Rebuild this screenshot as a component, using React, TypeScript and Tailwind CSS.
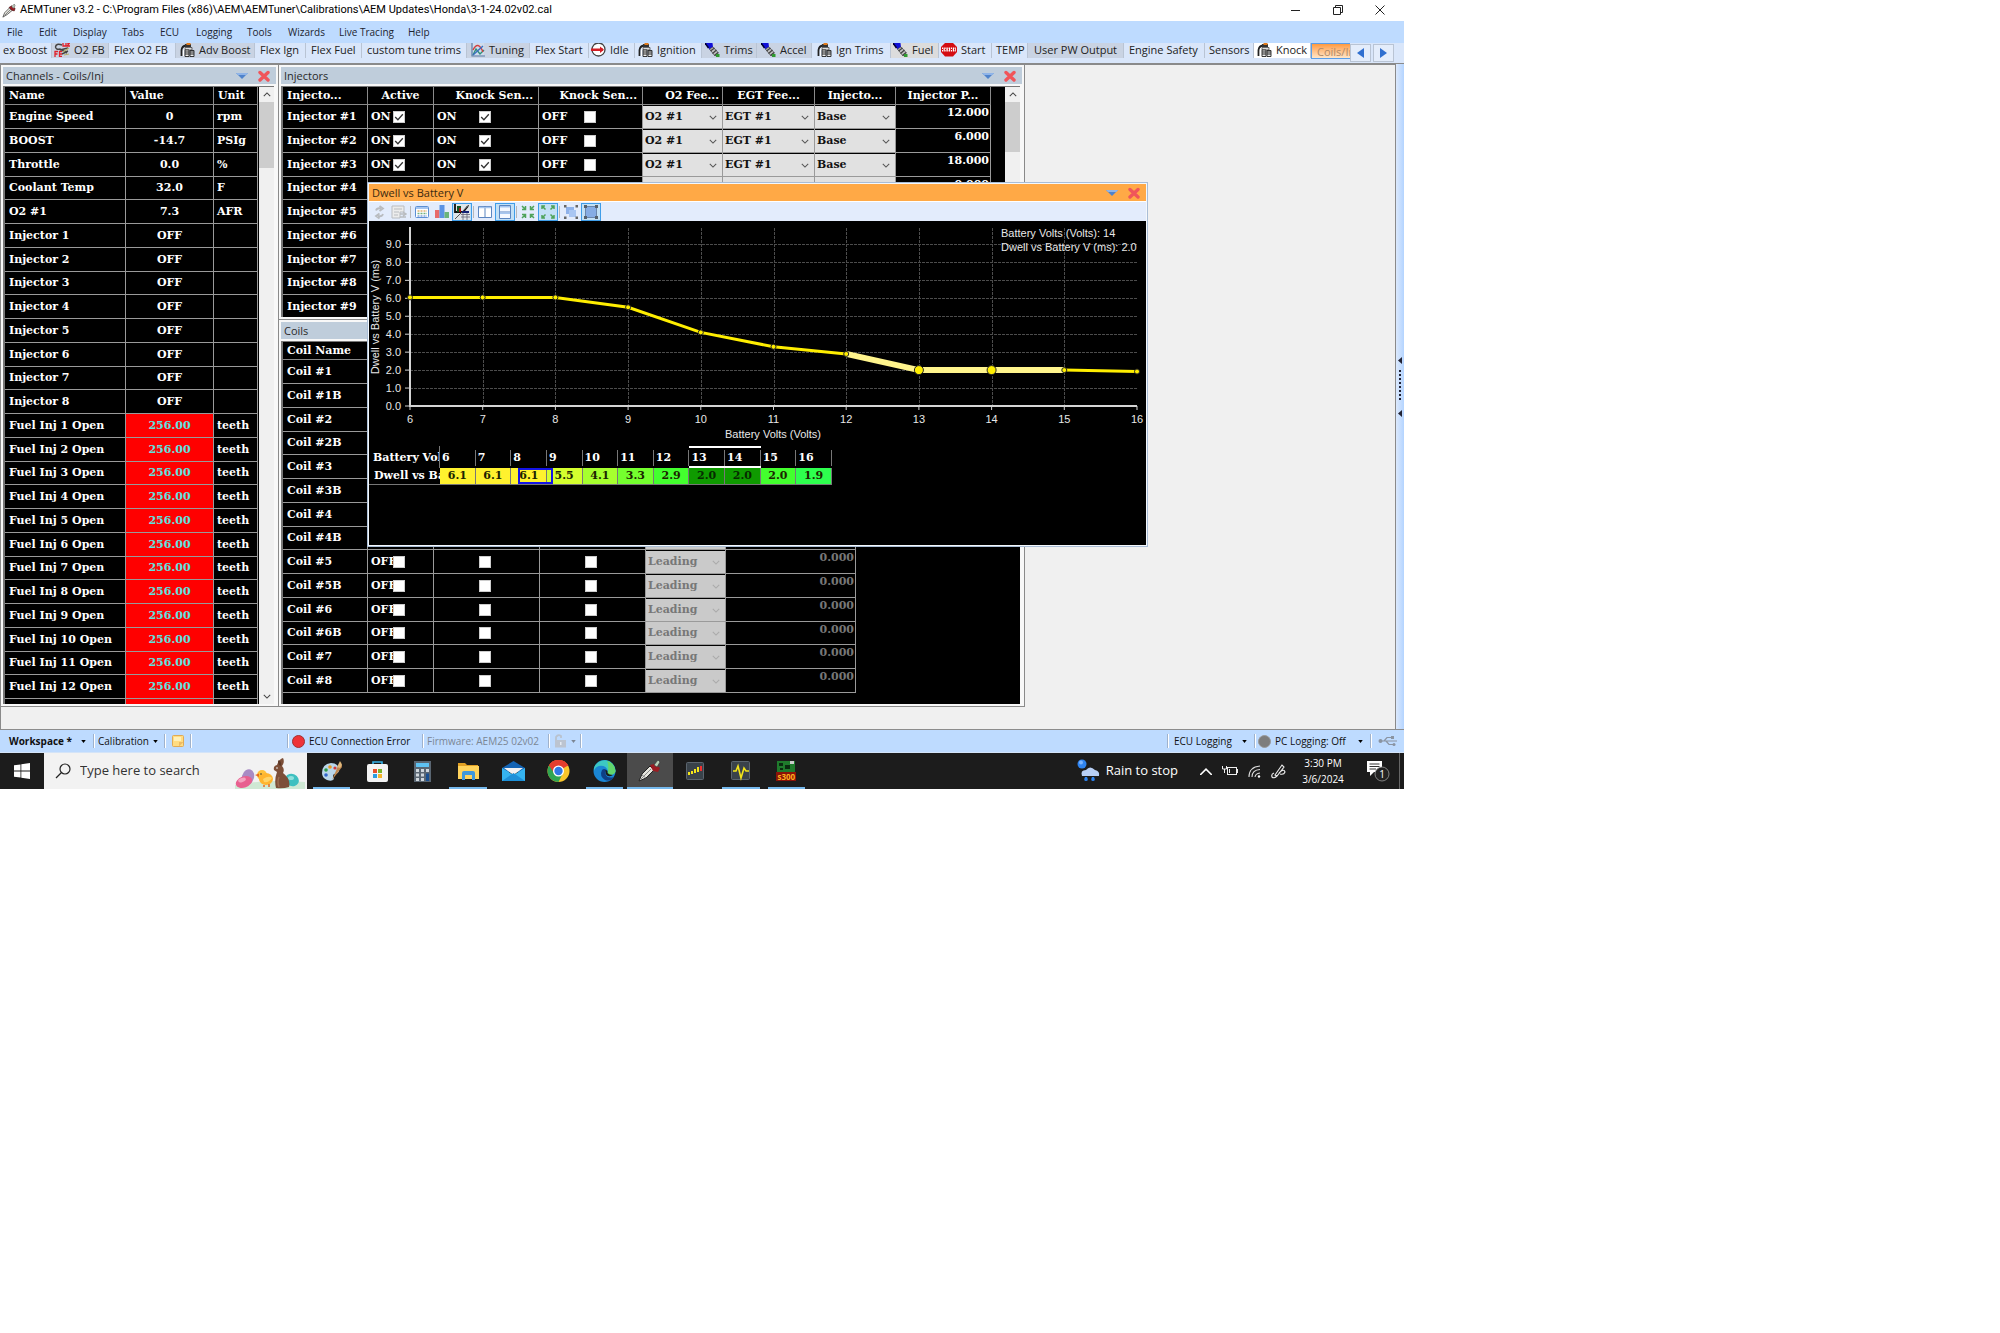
import React from "react";

const SLAB = "font-['DejaVu_Serif',serif] font-bold text-[11px] leading-4";
const UI = "font-['Open_Sans','Noto_Sans',sans-serif]";

/* ---------- small icons ---------- */

function PlugIcon({ className }: { className: string }) {
  return (
    <svg viewBox="0 0 16 16" className={className} aria-hidden="true">
      <path d="M1 15 L3 10 L9 4 L12 7 L6 12 Z" fill="#e4e4dc" stroke="#333" strokeWidth=".8" />
      <path d="M3 13 L10 6" stroke="#777" strokeWidth="1" />
      <path d="M8 4 L11 2 L15 5 L14 8 L11 7 Z" fill="#9b1c22" stroke="#3a0a0c" strokeWidth=".6" />
      <path d="M11 3 L14 0 L15 2 L13 5 Z" fill="#b8c8b8" stroke="#444" strokeWidth=".5" />
    </svg>
  );
}

function CoilIcon() {
  return (
    <svg viewBox="0 0 15 14" className="h-[14px] w-[15px] flex-none" aria-hidden="true">
      <path d="M1.500 13 V7 Q2 3 6 2.500" fill="none" stroke="#222" strokeWidth="1.800" />
      <path d="M3.500 13 V8 Q4 5 6 4.500" fill="none" stroke="#fff" strokeWidth="1.200" />
      <rect x="5" y="1" width="6" height="3" fill="#333" />
      <rect x="6.500" y="0" width="4" height="2" fill="#e07a1c" />
      <path d="M5 4.500 H12 V7 H5 Z" fill="#ddd" stroke="#333" strokeWidth=".7" />
      <path d="M5 7 H9 V13.500 H5 Z M10 7.500 H14 V13.500 H10 Z" fill="#eee" stroke="#222" strokeWidth=".9" />
      <path d="M5 9 H9 M5 11 H9 M10 9 H14 M10 11 H14" stroke="#222" strokeWidth="1" />
    </svg>
  );
}

function InjectorIcon() {
  return (
    <svg viewBox="0 0 15 14" className="h-[14px] w-[15px] flex-none" aria-hidden="true">
      <path d="M0 0 H7.500 L8 4 L4.500 6.500 Z" fill="#1010d8" />
      <path d="M0 0 L3.500 5" stroke="#003" strokeWidth="1.500" />
      <path d="M4.500 6 L8 4 L13.500 10 L10 13 Z" fill="#c4c4c4" stroke="#444" strokeWidth=".7" />
      <path d="M5.500 8 L9.500 5 M7.500 10.500 L11.500 7 M9.500 12.500 L13 9.500" stroke="#444" strokeWidth="1.300" />
      <rect x="11" y="11" width="3.500" height="3" fill="#2f9a2f" />
    </svg>
  );
}

function FeedbackIcon() {
  return (
    <svg viewBox="0 0 16 14" className="h-[14px] w-[16px] flex-none" aria-hidden="true">
      <path d="M8 2 Q2 0 1.500 4 Q2 7 6 6 L13 10 M6 7 L14 5 M8 11 L14 8" fill="none" stroke="#444" strokeWidth="1.500" />
      <path d="M9 9 L15 5 M10 12 L15 11" stroke="#b7b06a" strokeWidth="1.200" />
      <path d="M9 0 V3 H12 V0 M13 0 H15.500 L13 3 H16" fill="none" stroke="#e0202a" strokeWidth="1.300" />
      <path d="M1 14 V8.500 H4 M1 11 H3.500 M8 8.500 H5.500 V13.500 H8 M5.500 11 H8" fill="none" stroke="#e0202a" strokeWidth="1.300" />
    </svg>
  );
}

function CurveIcon() {
  return (
    <svg viewBox="0 0 14 14" className="h-[14px] w-[14px] flex-none" aria-hidden="true">
      <rect x="1" y="0" width="12" height="12" fill="#cfdcec" />
      <path d="M1 0 V13 H14" fill="none" stroke="#5a7ca8" strokeWidth="1.200" />
      <path d="M2 12 L5 6 L9 11 L13 7" fill="none" stroke="#2f8f7a" strokeWidth="1.400" />
      <path d="M2 7 Q7 -3 12 9" fill="none" stroke="#d04040" strokeWidth="1.400" />
      <path d="M2 12 L12 3" fill="none" stroke="#3a6fc0" strokeWidth="1.400" />
    </svg>
  );
}

function IdleIcon() {
  return (
    <svg viewBox="0 0 15 14" className="h-[14px] w-[15px] flex-none" aria-hidden="true">
      <circle cx="7.500" cy="6.500" r="6.500" fill="#fff" stroke="#444" strokeWidth="1.300" />
      <rect x="0" y="5.500" width="12" height="2.500" fill="#d21f26" />
      <path d="M9 3.500 L13 6.700 L9 10 Z" fill="#d21f26" />
    </svg>
  );
}

function StartSignIcon() {
  return (
    <svg viewBox="0 0 16 14" className="h-[14px] w-[16px] flex-none" aria-hidden="true">
      <path d="M4 0 H12 L16 4 V9 L12 13.500 H4 L0 9 V4 Z" fill="#d40c12" />
      <path d="M1 6.500 H15" stroke="#fff" strokeWidth="4" strokeDasharray="1.400 .8" />
      <path d="M1 6.500 H15" stroke="#d40c12" strokeWidth="1" strokeDasharray="1 2" />
    </svg>
  );
}

function Chevron({ className, d = "M1 1 L5 5 L9 1" }: { className: string; d?: string }) {
  return (
    <svg viewBox="0 0 10 6" className={className} aria-hidden="true">
      <path d={d} fill="none" stroke="currentColor" strokeWidth="1.300" />
    </svg>
  );
}

function CaptionButtons() {
  return (
    <span className="flex items-center gap-[10px] pr-[6px]">
      <button aria-label="Options" className="h-3 w-3">
        <svg viewBox="0 0 12 12" className="h-3 w-3">
          <path d="M0 3 H12 L6 9 Z" fill="#4f83cc" />
          <path d="M0 3 H12 L10.500 5 H2 Z" fill="#8fb4e8" />
        </svg>
      </button>
      <button aria-label="Close panel" className="h-3 w-3">
        <svg viewBox="0 0 12 12" className="h-3 w-3">
          <path d="M2 2.500 L10 10 M10 2.500 L2 10" stroke="#f0555a" strokeWidth="3.400" strokeLinecap="round" />
        </svg>
      </button>
    </span>
  );
}

/* ---------- tab strip ---------- */

type Tab = { label: string; w: string; icon?: React.ReactNode; tone?: string };

const TABS: Tab[] = [
  { label: "ex Boost", w: "w-[52px] pl-[3px]" },
  { label: "O2 FB", w: "w-[57px] pl-[2px]", icon: <FeedbackIcon />, tone: "bg-[#c9d3e3]" },
  { label: "Flex O2 FB", w: "w-[67px] pl-[5px]" },
  { label: "Adv Boost", w: "w-[79px] pl-1", icon: <CoilIcon />, tone: "bg-[#c9d3e3]" },
  { label: "Flex Ign", w: "w-[51px] pl-[5px]" },
  { label: "Flex Fuel", w: "w-[56px] pl-[5px]" },
  { label: "custom tune trims", w: "w-[105px] pl-[5px]" },
  { label: "Tuning", w: "w-[63px] pl-1", icon: <CurveIcon />, tone: "bg-[#c9d3e3]" },
  { label: "Flex Start", w: "w-[59px] pl-[5px]" },
  { label: "Idle", w: "w-[46px] pl-[2px]", icon: <IdleIcon /> },
  { label: "Ignition", w: "w-[67px] pl-[3px]", icon: <CoilIcon /> },
  { label: "Trims", w: "w-[55px] pl-[3px]", icon: <InjectorIcon />, tone: "bg-[#c9d3e3]" },
  { label: "Accel", w: "w-[55px] pl-1", icon: <InjectorIcon />, tone: "bg-[#c9d3e3]" },
  { label: "Ign Trims", w: "w-[79px] pl-[5px]", icon: <CoilIcon /> },
  { label: "Fuel", w: "w-[48px] pl-[2px]", icon: <InjectorIcon />, tone: "bg-[#dcdcdc]" },
  { label: "Start", w: "w-[53px] pl-[2px]", icon: <StartSignIcon /> },
  { label: "TEMP", w: "w-[36px] pl-[4px]" },
  { label: "User PW Output", w: "w-[96px] pl-[6px]", tone: "bg-[#c9d3e3]" },
  { label: "Engine Safety", w: "w-[81px] pl-[5px]" },
  { label: "Sensors", w: "w-[49px] pl-[4px]" },
  { label: "Knock", w: "w-[57px] pl-[3px]", icon: <CoilIcon />, tone: "bg-white" },
];

function TabStrip() {
  return (
    <div className="flex h-5 items-start bg-[#d9e6fa]">
      {TABS.map((t) => (
        <button
          key={t.label}
          className={`flex h-[15px] flex-none items-center gap-1 border-r border-[#b9c4d4] pb-[2px] text-left text-[11px] leading-[13px] whitespace-nowrap text-[#222] ${t.w} ${t.tone ?? ""}`}
        >
          {t.icon}
          <span>{t.label}</span>
        </button>
      ))}
      <button className="h-4 w-[39px] flex-none overflow-hidden border border-r-0 border-[#5a9ee8] bg-linear-to-b from-[#ff9a3c] to-[#ffe6c8] pl-[5px] text-left text-[11px] leading-[13px] whitespace-nowrap text-[#b08a68]">
        Coils/Inj
      </button>
      <button aria-label="Scroll tabs left" className="mt-px flex h-[18px] w-[21px] items-center justify-center border border-[#b9c4d4] bg-[#e4edfb]">
        <svg viewBox="0 0 8 10" className="h-[10px] w-2"><path d="M7 0 V10 L0 5 Z" fill="#2f6fd0" /></svg>
      </button>
      <button aria-label="Scroll tabs right" className="mt-px ml-[2px] flex h-[18px] w-[21px] items-center justify-center border border-[#b9c4d4] bg-[#e4edfb]">
        <svg viewBox="0 0 8 10" className="h-[10px] w-2"><path d="M0 0 V10 L7 5 Z" fill="#2f6fd0" /></svg>
      </button>
    </div>
  );
}

/* ---------- panels ---------- */

function Panel({ title, className, buttons = true, children }: { title: string; className: string; buttons?: boolean; children: React.ReactNode }) {
  return (
    <section className={`flex flex-col ${className}`}>
      <div className="flex flex-1 flex-col overflow-hidden border-2 border-[#f8f8f8]">
        <header className={`flex h-[17px] flex-none items-center justify-between bg-[#bfcddb] pl-[3px] ${UI}`}>
          <h2 className="text-[11px] leading-4 text-[#2a2a2a]">{title}</h2>
          {buttons && <CaptionButtons />}
        </header>
        <div className="flex flex-1 overflow-hidden border-t-2 border-r-2 border-[#f8f8f8] bg-black">
          <div className="flex flex-1 overflow-hidden border-t border-l-2 border-[#777]">{children}</div>
        </div>
      </div>
    </section>
  );
}

function ScrollBar({ thumb, down = false }: { thumb: string; down?: boolean }) {
  return (
    <div className="flex w-[15px] flex-none flex-col bg-[#f0f0f0] text-[#444]">
      <button aria-label="Scroll up" className="flex h-[15px] items-center justify-center">
        <Chevron className="h-[5px] w-2" d="M1 5 L5 1 L9 5" />
      </button>
      <div className={`bg-[#cdcdcd] ${thumb}`} />
      <div className="flex-1" />
      {down && (
        <button aria-label="Scroll down" className="flex h-[15px] items-center justify-center">
          <Chevron className="h-[5px] w-2" />
        </button>
      )}
    </div>
  );
}

const rowHeight = (i: number) => (i % 4 === 3 ? "h-[23px]" : "h-6");
const CELL = "border-r border-b border-[#9a9a9a] p-0";
const HEAD = "h-[18px] overflow-hidden border-r border-b border-[#8a8a8a] p-0 whitespace-nowrap";

const CHANNELS: [string, string, string][] = [
  ["Engine Speed", "0", "rpm"],
  ["BOOST", "-14.7", "PSIg"],
  ["Throttle", "0.0", "%"],
  ["Coolant Temp", "32.0", "F"],
  ["O2 #1", "7.3", "AFR"],
  ...[1, 2, 3, 4, 5, 6, 7, 8].map((n): [string, string, string] => [`Injector ${n}`, "OFF", ""]),
  ...[1, 2, 3, 4, 5, 6, 7, 8, 9, 10, 11, 12].map((n): [string, string, string] => [`Fuel Inj ${n} Open`, "256.00", "teeth"]),
  ["", " ", ""],
];

function ChannelsTable() {
  return (
    <div className="flex-1 overflow-hidden">
      <table className={`w-[253px] table-fixed border-separate border-spacing-0 text-white ${SLAB}`}>
        <colgroup>
          <col className="w-[121px]" />
          <col className="w-[88px]" />
          <col className="w-[44px]" />
        </colgroup>
        <thead>
          <tr>
            <th className={`${HEAD} pl-1 text-left`}>Name</th>
            <th className={`${HEAD} pl-1 text-left`}>Value</th>
            <th className={`${HEAD} pl-1 text-left`}>Unit</th>
          </tr>
        </thead>
        <tbody>
          {CHANNELS.map(([name, value, unit], i) => (
            <tr key={i} className={rowHeight(i)}>
              <td className={`${CELL} pl-1 whitespace-nowrap`}>{name}</td>
              <td className={`${CELL} text-center ${i > 12 ? "bg-[#ff0000] text-[#5fe3e0]" : ""}`}>{value}</td>
              <td className={`${CELL} pl-[3px]`}>{unit}</td>
            </tr>
          ))}
        </tbody>
      </table>
    </div>
  );
}

function Check({ text, label, checked, wide }: { text: string; label: string; checked: boolean; wide?: boolean }) {
  return (
    <label className="flex h-5 items-center pl-[3px]">
      <span className={`flex-none whitespace-nowrap ${wide ? "w-[42px]" : "w-[22px]"}`}>{text}</span>
      <span className="relative h-[12px] w-[12px] flex-none">
        <input type="checkbox" aria-label={label} defaultChecked={checked} className="block h-[12px] w-[12px] appearance-none border border-[#ccc] bg-white" />
        {checked && (
          <svg viewBox="0 0 11 11" className="pointer-events-none absolute inset-0 h-[12px] w-[12px]">
            <path d="M2 5.500 L4.500 8 L9 3" fill="none" stroke="#333" strokeWidth="1.200" />
          </svg>
        )}
      </span>
    </label>
  );
}

function Drop({ value, label, disabled }: { value: string; label: string; disabled?: boolean }) {
  return (
    <div className={`relative h-[22px] ${disabled ? "bg-[#cacaca] text-[#777]" : "bg-[#e1e1e1] text-[#111]"}`}>
      <select aria-label={label} disabled={disabled} defaultValue={value} className="block h-[22px] w-full appearance-none bg-transparent pl-[2px] opacity-100">
        <option>{value}</option>
      </select>
      <Chevron className={`pointer-events-none absolute top-[9px] right-[5px] h-[5px] w-2 ${disabled ? "text-[#aaa]" : "text-[#555]"}`} />
    </div>
  );
}

const PHASES = ["12.000", "6.000", "18.000", "0.000", "0.000", "0.000", "0.000", "0.000", "0.000"];

function InjectorsTable() {
  return (
    <div className="flex-1 overflow-hidden">
      <table className={`w-[708px] table-fixed border-separate border-spacing-0 text-white ${SLAB}`}>
        <colgroup>
          <col className="w-[85px]" />
          <col className="w-[66px]" />
          <col className="w-[105px]" />
          <col className="w-[104px]" />
          <col className="w-[80px]" />
          <col className="w-[92px]" />
          <col className="w-[81px]" />
          <col className="w-[95px]" />
        </colgroup>
        <thead>
          <tr>
            <th className={`${HEAD} pl-1 text-left`}>Injecto...</th>
            <th className={HEAD}>Active</th>
            <th className={`${HEAD} pr-[5px] text-right`}>Knock Sen...</th>
            <th className={`${HEAD} pr-[5px] text-right`}>Knock Sen...</th>
            <th className={`${HEAD} pr-[3px] text-right`}>O2 Fee...</th>
            <th className={HEAD}>EGT Fee...</th>
            <th className={HEAD}>Injecto...</th>
            <th className={HEAD}>Injector P...</th>
          </tr>
        </thead>
        <tbody>
          {PHASES.map((phase, i) => (
            <tr key={i} className={rowHeight(i)}>
              <td className={`${CELL} pl-1 whitespace-nowrap`}>Injector #{i + 1}</td>
              <td className={CELL}><Check text="ON" label={`Injector ${i + 1} active`} checked /></td>
              <td className={CELL}><Check text="ON" label={`Injector ${i + 1} knock sensor 1`} checked wide /></td>
              <td className={CELL}><Check text="OFF" label={`Injector ${i + 1} knock sensor 2`} checked={false} wide /></td>
              <td className={CELL}><Drop value="O2 #1" label={`Injector ${i + 1} O2 feedback`} /></td>
              <td className={CELL}><Drop value="EGT #1" label={`Injector ${i + 1} EGT feedback`} /></td>
              <td className={CELL}><Drop value="Base" label={`Injector ${i + 1} map`} /></td>
              <td className={`${CELL} pr-px text-right align-top`}>{phase}</td>
            </tr>
          ))}
        </tbody>
      </table>
    </div>
  );
}

const COILS = ["1", "1B", "2", "2B", "3", "3B", "4", "4B", "5", "5B", "6", "6B", "7", "8"];

function CoilsTable() {
  return (
    <div className="flex-1 overflow-hidden">
      <table className={`w-[573px] table-fixed border-separate border-spacing-0 text-white ${SLAB}`}>
        <colgroup>
          <col className="w-[85px]" />
          <col className="w-[66px]" />
          <col className="w-[106px]" />
          <col className="w-[106px]" />
          <col className="w-[80px]" />
          <col className="w-[130px]" />
        </colgroup>
        <thead>
          <tr>
            <th className={`${HEAD} pl-1 text-left`}>Coil Name</th>
            <th className={HEAD}>Active</th>
            <th className={HEAD}>Knock Sen...</th>
            <th className={HEAD}>Knock Sen...</th>
            <th className={HEAD}>Type</th>
            <th className={HEAD}>Phase</th>
          </tr>
        </thead>
        <tbody>
          {COILS.map((c, i) => (
            <tr key={c} className={rowHeight(i)}>
              <td className={`${CELL} pl-1`}>Coil #{c}</td>
              <td className={CELL}><Check text="OFF" label={`Coil ${c} active`} checked={false} /></td>
              <td className={CELL}><Check text="" label={`Coil ${c} knock sensor 1`} checked={false} wide /></td>
              <td className={CELL}><Check text="" label={`Coil ${c} knock sensor 2`} checked={false} wide /></td>
              <td className={CELL}><Drop value="Leading" label={`Coil ${c} type`} disabled /></td>
              <td className={`${CELL} pr-px text-right align-top text-[#777]`}>0.000</td>
            </tr>
          ))}
        </tbody>
      </table>
    </div>
  );
}

/* ---------- dwell window ---------- */

function ToolButton({ label, on, children }: { label: string; on?: boolean; children: React.ReactNode }) {
  return (
    <button aria-label={label} className={`flex h-[18px] w-5 flex-none items-center justify-center ${on ? "border border-[#3f9de8] bg-[#c2e0f6]" : ""}`}>
      <svg viewBox="0 0 16 16" className="h-4 w-4 flex-none">{children}</svg>
    </button>
  );
}

function ToolGap() {
  return <span className="mx-px h-3 w-px flex-none bg-[#b8b8b8]" />;
}

function DwellToolbar() {
  const gray = "#b9bcc0";
  const green = "#4fa35a";
  return (
    <div className="flex h-5 items-center border-t border-white bg-[#e3ecfc]">
      <ToolButton label="Refresh">
        <path d="M5 6.500 Q6 3.500 10 4.500 M8.500 2 L12 4.500 L8.500 7 M12 10 Q11 13 7 12 M8.500 9.500 L5 12 L8.500 14.500" fill="none" stroke={gray} strokeWidth="1.800" />
      </ToolButton>
      <ToolButton label="Export">
        <path d="M1 2 H13 V8 H9 V14 H1 Z" fill="#ececec" stroke={gray} />
        <path d="M3 5 H11 M3 8 H8 M3 11 H7" stroke={gray} />
        <path d="M9 10 H15 M12 8 L15 10 L12 12 M15 13 H9" fill="none" stroke={gray} strokeWidth="1.500" />
      </ToolButton>
      <ToolGap />
      <ToolButton label="Table">
        <rect x="1.500" y="2.500" width="13" height="11" rx="1" fill="#fff" stroke="#5b8fd4" />
        <rect x="2" y="3" width="12" height="2" fill="#a6c6f0" />
        <path d="M3.500 7 H13" stroke="#e0b070" strokeWidth="1.500" strokeDasharray="2 1" />
        <path d="M3.500 9.500 H13" stroke="#70b080" strokeWidth="1.500" strokeDasharray="2 1" />
        <path d="M3.500 12 H13" stroke="#80a4dc" strokeWidth="1.400" strokeDasharray="2 1" />
      </ToolButton>
      <ToolButton label="Bars">
        <rect x="1" y="6" width="4.500" height="8" fill="#e86a6a" />
        <rect x="5.500" y="1" width="5" height="13" fill="#5b93e4" />
        <rect x="10.500" y="8" width="4.500" height="6" fill="#6ab47a" />
      </ToolButton>
      <ToolButton label="Chart and grid" on>
        <rect x="0" y="0" width="16" height="16" fill="#dfe6ea" />
        <path d="M1 0 V8 H9 L14 2" fill="none" stroke="#111" strokeWidth="1.800" />
        <rect x="3" y="2" width="4" height="6" fill="#152" />
        <rect x="5" y="4" width="2" height="4" fill="#a11" />
        <path d="M1 15 L15 1" stroke="#555" />
        <path d="M7 10.500 H16 M7 13 H16 M9 9 V16 M13 9 V16" stroke="#667" strokeWidth=".8" />
        <rect x="8" y="7" width="7" height="2" fill="#127" />
      </ToolButton>
      <ToolGap />
      <ToolButton label="Side by side">
        <path d="M1.500 2.500 H14.500 V13.500 H1.500 Z M8 2 V14" fill="#fff" stroke="#5b85c0" />
        <path d="M2 3.500 H7.500 M8.500 3.500 H14" stroke="#a6c6f0" strokeWidth="1.500" />
      </ToolButton>
      <ToolButton label="Stacked" on>
        <path d="M2.500 1.500 H13.500 V14.500 H2.500 Z M2 8 H14" fill="#f4f8ff" stroke="#5b85c0" />
        <path d="M3 2.800 H13 M3 9.300 H13" stroke="#a6c6f0" strokeWidth="1.500" />
      </ToolButton>
      <ToolGap />
      <ToolButton label="Shrink">
        <path d="M2 2 L5 5 M5.500 2 V5.500 H2 M14 2 L11 5 M10.500 2 V5.500 H14 M2 14 L5 11 M2 10.500 H5.500 V14 M14 14 L11 11 M14 10.500 H10.500 V14" fill="none" stroke={green} strokeWidth="1.500" />
      </ToolButton>
      <ToolButton label="Grow" on>
        <path d="M5.500 5.500 L2 2 M2 5 V2 H5 M10.500 5.500 L14 2 M11 2 H14 V5 M5.500 10.500 L2 14 M2 11 V14 H5 M10.500 10.500 L14 14 M14 11 V14 H11" fill="none" stroke={green} strokeWidth="1.500" />
      </ToolButton>
      <ToolGap />
      <ToolButton label="Group">
        <rect x="3" y="3" width="8" height="7" fill="#8fb2ea" />
        <rect x="6" y="6" width="7" height="7" fill="#a9c6f2" />
        <path d="M1 1 h2.500 v2.500 h-2.500 Z M12.500 1 h2.500 v2.500 h-2.500 Z M1 12.500 h2.500 v2.500 h-2.500 Z M12.500 12.500 h2.500 v2.500 h-2.500 Z" fill="#666" />
      </ToolButton>
      <ToolButton label="Select area" on>
        <rect x="2.500" y="2.500" width="11" height="11" fill="#86ace4" stroke="#6a86ac" />
        <path d="M1 1 h3 v3 h-3 Z M12 1 h3 v3 h-3 Z M1 12 h3 v3 h-3 Z M12 12 h3 v3 h-3 Z" fill="#56606c" />
      </ToolButton>
    </div>
  );
}

const DWELL = [6.05, 6.05, 6.05, 5.5, 4.1, 3.3, 2.9, 2.0, 2.0, 2.0, 1.92];
const chartX = (i: number) => 41 + i * 72.7;
const chartY = (v: number) => 185 - v * 17.95;

function DwellChart() {
  const pts = DWELL.map((v, i) => [chartX(i), chartY(v)]);
  const line = (a: number, b: number) => pts.slice(a, b).map((p) => p.join(",")).join(" ");
  return (
    <svg viewBox="0 0 777 224" className="block h-[224px] w-[777px] font-['Liberation_Sans',sans-serif] text-[11px]" fill="#e8e8e8">
      <g stroke="#4c4c4c" strokeDasharray="3 1">
        {[1, 2, 3, 4, 5, 6, 7, 8, 9].map((v) => <line key={v} x1="41" x2="768" y1={Math.round(chartY(v)) + 0.5} y2={Math.round(chartY(v)) + 0.5} />)}
        {[1, 2, 3, 4, 5, 6, 7, 8, 9].map((i) => <line key={i} y1="7" y2="185" x1={Math.round(chartX(i)) + 0.5} x2={Math.round(chartX(i)) + 0.5} />)}
      </g>
      <path d="M41 6 V185 H768" fill="none" stroke="#d4d4d4" strokeWidth="2" />
      {[0, 1, 2, 3, 4, 5, 6, 7, 8, 9].map((v) => (
        <g key={v}>
          <line x1="36" x2="41" y1={chartY(v)} y2={chartY(v)} stroke="#d4d4d4" />
          <text x="32" y={chartY(v) + 4} textAnchor="end">{v.toFixed(1)}</text>
        </g>
      ))}
      {DWELL.map((_, i) => (
        <g key={i}>
          <line x1={chartX(i)} x2={chartX(i)} y1="185" y2="189" stroke="#d4d4d4" />
          <text x={chartX(i)} y="202" textAnchor="middle">{i + 6}</text>
        </g>
      ))}
      <text x="404" y="217" textAnchor="middle">Battery Volts (Volts)</text>
      <text transform="translate(10 96) rotate(-90)" textAnchor="middle">Dwell vs Battery V (ms)</text>
      <text x="632" y="16">Battery Volts (Volts): 14</text>
      <text x="632" y="30">Dwell vs Battery V (ms): 2.0</text>
      <polyline points={line(0, 7)} fill="none" stroke="#ffee00" strokeWidth="3" />
      <polyline points={line(9, 11)} fill="none" stroke="#ffee00" strokeWidth="3" />
      <polyline points={line(6, 10)} fill="none" stroke="#fff48c" strokeWidth="6" />
      {pts.map(([x, y], i) => (
        <circle key={i} cx={x} cy={y} r={i === 7 || i === 8 ? 4.5 : 2.5} fill="#ffee00" stroke="#222" strokeWidth="1" />
      ))}
    </svg>
  );
}

const GRID: [string, string, string][] = [
  ["6", "6.1", "bg-[#fff22e]"],
  ["7", "6.1", "bg-[#fff22e]"],
  ["8", "6.1", "bg-[#fff22e]"],
  ["9", "5.5", "bg-[#d5ff2e]"],
  ["10", "4.1", "bg-[#a6ff2e]"],
  ["11", "3.3", "bg-[#74ff2e]"],
  ["12", "2.9", "bg-[#43ff2e]"],
  ["13", "2.0", "bg-[#0f9a00]"],
  ["14", "2.0", "bg-[#0f9a00]"],
  ["15", "2.0", "bg-[#43ff2e]"],
  ["16", "1.9", "bg-[#2eff4e]"],
];

function DwellGrid() {
  return (
    <table className={`mt-px w-[463px] table-fixed border-separate border-spacing-0 text-white ${SLAB}`}>
      <colgroup>
        <col className="w-[71px]" />
      </colgroup>
      <thead>
        <tr>
          <th className="h-[22px] overflow-hidden border-r border-[#777] p-0 pt-[2px] pl-1 text-left whitespace-nowrap">Battery Volts</th>
          {GRID.map(([volt], i) => (
            <th key={volt} className="p-0 text-left">
              <div className={`flex h-[22px] items-center border-y-2 pt-[2px] ${i === 7 || i === 8 ? "border-white" : "border-transparent"}`}>
                <span className="block h-4 w-full border-r border-[#777] pl-[2px]">{volt}</span>
              </div>
            </th>
          ))}
        </tr>
      </thead>
      <tbody>
        <tr>
          <th className="h-[17px] overflow-hidden border-b border-[#777] p-0 pl-[5px] text-left whitespace-nowrap">Dwell vs Battery V</th>
          {GRID.map(([volt, v, tone], i) => (
            <td key={volt} className={`relative border-r border-b border-[#777] p-0 ${tone} ${i === 2 ? "pl-2 text-left" : "text-center"} ${i === 7 || i === 8 ? "text-[#062a00]" : "text-[#1c2400]"}`}>
              {v}
              {i === 2 && <span className="absolute top-0 left-[7px] z-10 h-4 w-[35px] border-2 border-[#1414e6]" />}
            </td>
          ))}
        </tr>
      </tbody>
    </table>
  );
}

function DwellWindow() {
  return (
    <section className="absolute top-[182px] left-[367px] z-20 w-[781px] border border-[#a9bdd6] bg-black">
      <div className="border border-[#f4f8fc]">
        <header className={`flex h-[17px] items-center justify-between bg-[#ffa946] pl-[3px] ${UI}`}>
          <h2 className="text-[11px] leading-4 text-[#3c2a10]">Dwell vs Battery V</h2>
          <CaptionButtons />
        </header>
        <DwellToolbar />
        <DwellChart />
        <DwellGrid />
        <div className="h-[60px]" />
      </div>
    </section>
  );
}

/* ---------- status bar ---------- */

function StatusSep() {
  return <span className="h-[14px] w-[2px] flex-none border-l border-[#9fb2cc] bg-white" />;
}

function Caret({ className = "text-black" }: { className?: string }) {
  return (
    <svg viewBox="0 0 6 4" className={`h-[3px] w-[5px] flex-none ${className}`} aria-hidden="true">
      <path d="M0 0 H6 L3 4 Z" fill="currentColor" />
    </svg>
  );
}

function StatusBar() {
  return (
    <footer className={`flex h-6 items-center border-t border-b border-t-[#8c8c8c] border-b-[#d4e4f8] bg-[#bedbff] text-[11px] whitespace-nowrap text-[#111] ${UI}`}>
      <button className="flex w-[93px] items-center justify-between pr-[7px] pl-[9px] text-[10px] font-bold">Workspace * <Caret /></button>
      <StatusSep />
      <button className="flex w-[69px] items-center justify-between pr-[6px] pl-[3px] text-[10px]">Calibration <Caret /></button>
      <StatusSep />
      <button aria-label="Notes" className="flex w-6 justify-center">
        <svg viewBox="0 0 12 12" className="h-3 w-3">
          <rect x=".5" y=".5" width="11" height="11" rx="1" fill="#ffdc82" stroke="#e0aa55" />
          <rect x="2" y="2" width="7" height="4" fill="#fff0b8" />
          <path d="M7 11.500 V7 H11.500" fill="#eebb66" />
        </svg>
      </button>
      <StatusSep />
      <span className="w-[95px]" />
      <StatusSep />
      <span className="flex w-[133px] items-center gap-1 pl-[3px] text-[10px]">
        <span className="h-[13px] w-[13px] rounded-full border border-[#a03030] bg-[#ee3338]" />
        ECU Connection Error
      </span>
      <StatusSep />
      <span className="w-[124px] pl-[3px] text-[10px] text-[#7b8694]">Firmware: AEM25 02v02</span>
      <StatusSep />
      <button aria-label="Lock" className="flex w-[30px] items-center justify-center gap-1 text-[#7b8694]">
        <svg viewBox="0 0 13 14" className="h-[14px] w-[13px]">
          <path d="M2 7 V3 Q4 0 7 2 V4" fill="none" stroke="#b9c2ce" strokeWidth="1.800" />
          <rect x="1" y="6" width="11" height="7.500" fill="#bcc4d0" />
          <rect x="6" y="8" width="1.500" height="3" fill="#e4eaf2" />
        </svg>
        <Caret className="text-[#7b8694]" />
      </button>
      <StatusSep />
      <span className="flex-1" />
      <StatusSep />
      <button className="flex w-[85px] items-center justify-between pr-[7px] pl-[5px] text-[10px]">ECU Logging <Caret /></button>
      <StatusSep />
      <button className="flex w-[114px] items-center gap-1 pr-[7px] pl-[2px] text-[10px]">
        <span className="h-[13px] w-[13px] rounded-full border border-[#999] bg-[#7d7d7d]" />
        <span className="flex-1 text-left">PC Logging: Off</span>
        <Caret />
      </button>
      <StatusSep />
      <svg viewBox="0 0 20 10" className="mx-[6px] h-[10px] w-5 flex-none" aria-hidden="true">
        <circle cx="2.500" cy="5" r="2" fill="#8a94a2" />
        <path d="M4 5 H19 M6 5 L9 1.500 H14 M8 5 L11 8.500 H15" fill="none" stroke="#8a94a2" strokeWidth="1.200" />
        <rect x="13" y="0" width="3" height="3" fill="#8a94a2" />
        <circle cx="16" cy="8.500" r="1.500" fill="#8a94a2" />
      </svg>
    </footer>
  );
}

/* ---------- taskbar ---------- */

function EasterArt() {
  return (
    <svg viewBox="0 0 70 36" className="h-9 w-[70px] flex-none" aria-hidden="true">
      <path d="M0 36 V32 Q30 26 70 29 V36 Z" fill="#cfe8d4" />
      <ellipse cx="13" cy="24" rx="6" ry="8" fill="#a98bc4" transform="rotate(18 13 24)" />
      <ellipse cx="9" cy="29" rx="8.500" ry="5.500" fill="#e8608f" transform="rotate(-20 9 29)" />
      <ellipse cx="7" cy="27" rx="4" ry="2" fill="#f4a3c0" transform="rotate(-20 7 27)" />
      <ellipse cx="57" cy="27" rx="7" ry="6" fill="#3fc0c0" transform="rotate(25 57 27)" />
      <ellipse cx="56" cy="25" rx="3" ry="2" fill="#8fe0dc" />
      <circle cx="27" cy="22" r="5" fill="#ffc23a" />
      <ellipse cx="31" cy="26" rx="7" ry="6" fill="#ffb52e" />
      <path d="M28 26 Q34 22 37 25 Q34 30 29 29 Z" fill="#ffd467" />
      <path d="M20 22 L24 20.500 V24 Z" fill="#e86a20" />
      <circle cx="26" cy="21" r=".8" fill="#333" />
      <path d="M29 32 V34 M34 31 V34" stroke="#e86a20" strokeWidth="1.500" />
      <path d="M41 35 Q39 27 42 19 L39 17 Q38 13 42 12 Q44 6 48 5 Q50 9 47 13 Q50 16 48 20 Q56 26 54 34 Q48 36 41 35 Z" fill="#7d4f38" />
      <path d="M44 12 Q42 8 44 7 Q47 9 46 13" fill="#5e3826" />
      <path d="M44 24 Q42 29 44 34" fill="none" stroke="#9a6b50" strokeWidth="1.500" />
      <circle cx="42" cy="15" r=".8" fill="#fff" />
    </svg>
  );
}

const TASKS: { label: string; open?: boolean; active?: boolean; art: React.ReactNode }[] = [
  {
    label: "Paint",
    open: true,
    art: (
      <>
        <path d="M2 13 Q2 4 11 3 Q19 3 19 11 Q18 14 14 14 Q12 16 14 19 Q12 22 7 20 Q2 18 2 13 Z" fill="#b9d6ea" />
        <circle cx="6" cy="10" r="1.800" fill="#2f9a4a" />
        <circle cx="10" cy="7" r="1.800" fill="#e89a20" />
        <circle cx="15" cy="8" r="1.600" fill="#d43a3a" />
        <circle cx="6" cy="15" r="1.800" fill="#3366cc" />
        <path d="M12 20 L18 6 L21 2 L22 7 Z" fill="#c08850" />
        <path d="M17 7 L20 1 L22 5 L20 8 Z" fill="#e0b87c" />
      </>
    ),
  },
  {
    label: "Store",
    art: (
      <>
        <path d="M7 5 V2 H16 V5" fill="none" stroke="#36b2e8" strokeWidth="1.600" />
        <rect x="1" y="4" width="21" height="18" rx="2" fill="#f4f4f4" />
        <rect x="7" y="9" width="4" height="4" fill="#e8512a" />
        <rect x="12" y="9" width="4" height="4" fill="#7ab52a" />
        <rect x="7" y="14" width="4" height="4" fill="#2a9de0" />
        <rect x="12" y="14" width="4" height="4" fill="#f5b52a" />
      </>
    ),
  },
  {
    label: "Calculator",
    art: (
      <>
        <rect x="3" y="1" width="17" height="21" fill="#5a6672" />
        <rect x="5" y="3" width="13" height="4" fill="#5ec2f2" />
        <path d="M5 9 h3 v3 h-3 Z M10 9 h3 v3 h-3 Z M5 13.500 h3 v3 h-3 Z M10 13.500 h3 v3 h-3 Z M5 18 h3 v3 h-3 Z M10 18 h3 v3 h-3 Z M15 9 h3 v3 h-3 Z" fill="#cfd6dc" />
        <rect x="15" y="13.500" width="3" height="7.500" fill="#1a4f90" />
      </>
    ),
  },
  {
    label: "File Explorer",
    open: true,
    art: (
      <>
        <path d="M1 3 H8 L10 5 H21 V8 H1 Z" fill="#e0a024" />
        <rect x="1" y="6" width="21" height="13" fill="#ffd35c" />
        <path d="M5 20 V13 Q5 11 7 11 H16 Q18 11 18 13 V20 H15 V15 H8 V20 Z" fill="#3e97dc" />
      </>
    ),
  },
  {
    label: "Mail",
    art: (
      <>
        <path d="M0 8 L11.500 1 L23 8 V12 H0 Z" fill="#1464b4" />
        <path d="M2 8 H21 L11.500 15 Z" fill="#f2f2f2" />
        <path d="M0 8 L11.500 15 L23 8 V21 H0 Z" fill="#35b4f0" />
        <path d="M0 21 L11.500 13 L23 21 Z" fill="#1d90d8" />
      </>
    ),
  },
  {
    label: "Chrome",
    art: (
      <>
        <circle cx="11.500" cy="11" r="11" fill="#f9c52c" />
        <path d="M11.500 11 L2 5.500 A11 11 0 0 1 21 5.500 Z" fill="#e43e2e" />
        <path d="M11.500 11 L2 5.500 A11 11 0 0 0 11.500 22 L16 13 Z" fill="#2fa552" />
        <path d="M11.500 6 H21.500 A11 11 0 0 0 2 5.500 L7 13 Z" fill="#e43e2e" />
        <circle cx="11.500" cy="11" r="5.500" fill="#fff" />
        <circle cx="11.500" cy="11" r="4.200" fill="#2f78e4" />
      </>
    ),
  },
  {
    label: "Edge",
    open: true,
    art: (
      <>
        <circle cx="11.500" cy="11" r="11" fill="#1a86d4" />
        <path d="M1 8 A11 11 0 0 1 22.500 11 Q22 15 16 15 Q14 14 15 11 Q13 5 6 6 Q2 7 1 11 Z" fill="#3cc8c4" />
        <path d="M14 1 A11 11 0 0 1 22.500 11 Q22 15 16 15 Q14 14 15 11 Q16 5 14 1 Z" fill="#62d66c" />
        <path d="M9 10 Q6 16 12 20 Q18 22 21 17 Q14 19 12.500 14 Q12 12 13.500 10 Q11 8 9 10 Z" fill="#0f3f86" />
        <path d="M12.500 10 Q15 10 14.500 13 Q16 15 20 15 Q15 18 12.800 14 Z" fill="#1b1b1b" />
      </>
    ),
  },
  {
    label: "AEMTuner",
    open: true,
    active: true,
    art: (
      <>
        <path d="M1 21 L4 14 L12 6 L16 10 L8 18 Z" fill="#e4e4dc" stroke="#222" />
        <path d="M3 19 L13 9 M4 15 L8 18" stroke="#888" />
        <path d="M12 5 L16 4 L22 8 L20 12 L15 11 Z" fill="#9b1c22" />
        <path d="M16 5 L20 0 L22 2 L19 7 Z" fill="#b8d0b8" stroke="#333" strokeWidth=".6" />
      </>
    ),
  },
  {
    label: "Signal",
    art: (
      <>
        <rect x="2.500" y="2.500" width="17" height="17" rx="1" fill="#39424a" stroke="#5b656e" />
        <path d="M4 12 h2 v3 h-2 Z M7 11 h2 v3 h-2 Z M10 9 h2 v4 h-2 Z M13 7 h2 v5 h-2 Z" fill="#f4e51a" />
        <rect x="16" y="6" width="2" height="5" fill="#f03030" />
      </>
    ),
  },
  {
    label: "Monitor",
    open: true,
    art: (
      <>
        <rect x="2.500" y="1.500" width="18" height="18" rx="1" fill="#39424a" stroke="#5b656e" />
        <path d="M4 11 H7 L9 6 L12 18 L15 8 L17 11 H20" fill="none" stroke="#f4e51a" strokeWidth="1.600" />
      </>
    ),
  },
];

function TaskButton({ label, open, active, children }: { label: string; open?: boolean; active?: boolean; children: React.ReactNode }) {
  return (
    <button aria-label={label} className={`relative flex h-9 flex-1 items-center justify-center ${active ? "bg-[#4b4b4b]" : ""}`}>
      {children}
      {open && <span className={`absolute bottom-0 h-[2px] bg-[#76b9ed] ${active ? "inset-x-0" : "inset-x-1"}`} />}
    </button>
  );
}

function Taskbar() {
  return (
    <div className={`flex h-9 items-center bg-[#1c1c1c] text-white ${UI}`}>
      <button aria-label="Start" className="flex h-9 w-11 flex-none items-center justify-center">
        <svg viewBox="0 0 16 16" className="h-4 w-4">
          <path d="M0 2.300 L6.500 1.400 V7.600 H0 Z M7.300 1.300 L16 0 V7.600 H7.300 Z M0 8.400 H6.500 V14.600 L0 13.700 Z M7.300 8.400 H16 V16 L7.300 14.700 Z" fill="#fff" />
        </svg>
      </button>
      <label className="flex h-9 w-[263px] flex-none items-center bg-[#f2f2f2] pr-[2px] pl-[11px]">
        <svg viewBox="0 0 16 16" className="h-4 w-4 flex-none" aria-hidden="true">
          <circle cx="10" cy="6" r="5" fill="none" stroke="#222" strokeWidth="1.200" />
          <path d="M6.500 9.500 L1 15" stroke="#222" strokeWidth="1.200" />
        </svg>
        <input aria-label="Search" placeholder="Type here to search" className="min-w-0 flex-1 bg-transparent pl-[9px] text-[13px] outline-none placeholder:text-[#333] placeholder:opacity-100" />
        <EasterArt />
      </label>
      <div className="flex w-[502px] flex-none items-center pl-[2px]">
        {TASKS.map((t) => (
          <TaskButton key={t.label} label={t.label} open={t.open} active={t.active}>
            <svg viewBox="0 0 23 23" className="h-[23px] w-[23px]">{t.art}</svg>
          </TaskButton>
        ))}
        <TaskButton label="s300" open>
          <span className="flex flex-col items-center">
            <svg viewBox="0 0 18 11" className="h-[11px] w-[18px]">
              <rect width="18" height="11" fill="#1f7a2c" />
              <path d="M2 2 h4 v3 h-4 Z M8 4 h5 v4 h-5 Z M3 7 h3 v2 h-3 Z" fill="#0a2a10" />
              <rect x="13" y="0" width="4" height="3" fill="#ccc" />
            </svg>
            <span className="bg-[#8c1208] px-px text-[8px] leading-[9px] font-bold text-[#ffb01e]">s300</span>
          </span>
        </TaskButton>
      </div>
      <span className="flex-1" />
      <button className="flex flex-none items-center gap-[6px] text-[13px]">
        <svg viewBox="0 0 23 24" className="h-6 w-[23px]">
          <circle cx="5" cy="5" r="4.500" fill="#2f84f0" />
          <circle cx="4" cy="3.500" r="2" fill="#7ab4ff" />
          <path d="M5 17 Q3 11 9 11 Q13 6 18 11 Q23 12 22 17 Z" fill="#b9d0f6" />
          <path d="M8 18 q-2 4 1 4 q3 0 1-4 Z M15 18 q-2 4 1 4 q3 0 1-4 Z" fill="#2f84f0" />
        </svg>
        Rain to stop
      </button>
      <div className="ml-[22px] flex flex-none items-center gap-[10px] text-white">
        <button aria-label="Show hidden icons" className="flex"><Chevron className="h-[7px] w-3" d="M0 6 L5 1 L10 6" /></button>
        <svg viewBox="0 0 16 12" className="h-3 w-4" aria-hidden="true">
          <rect x="5.500" y="2.500" width="9" height="7" fill="none" stroke="#eee" />
          <path d="M15.500 4 V8" stroke="#eee" strokeWidth="1" />
          <path d="M.5 1 V4 H4.500 V1 M2.500 4 V8 M7.500 4 V8" fill="none" stroke="#eee" />
        </svg>
        <svg viewBox="0 0 13 13" className="h-[13px] w-[13px]" aria-hidden="true">
          <path d="M1 12 Q1 2 12 1 M4 12 Q4 5 12 4.500 M7 12 Q7.500 8.500 12 8" fill="none" stroke="#ddd" strokeWidth="1.100" />
          <circle cx="11" cy="11.500" r="1.200" fill="#fff" />
        </svg>
        <svg viewBox="0 0 15 15" className="h-[15px] w-[15px]" aria-hidden="true">
          <path d="M4 11 L11 1 L13 3 L6 12 Z M3 9 Q0 10 1 13 Q3 15 6 12 M8 9 Q13 4 14 8 Q13 11 9 10" fill="none" stroke="#eee" strokeWidth="1.100" />
        </svg>
      </div>
      <div className="ml-3 flex w-[50px] flex-none flex-col items-center text-[10px] leading-4 whitespace-nowrap">
        <span>3:30 PM</span>
        <span>3/6/2024</span>
      </div>
      <button aria-label="Notifications" className="mr-[9px] ml-[18px] flex-none">
        <svg viewBox="0 0 24 24" className="h-6 w-6">
          <path d="M1 2 H16 V13 H8 L4 17 V13 H1 Z" fill="#fff" />
          <path d="M3.500 5 H13.500 M3.500 7.500 H13.500 M3.500 10 H10" stroke="#333" />
          <circle cx="16" cy="15" r="7" fill="#222" stroke="#999" strokeWidth=".8" />
          <text x="16" y="18.500" textAnchor="middle" fontSize="10" fill="#fff">1</text>
        </svg>
      </button>
      <span className="mr-1 h-9 w-px flex-none bg-[#666]" />
    </div>
  );
}

/* ---------- application ---------- */

const MENUS: [string, string][] = [
  ["File", "w-8"],
  ["Edit", "w-[34px]"],
  ["Display", "w-[49px]"],
  ["Tabs", "w-[38px]"],
  ["ECU", "w-9"],
  ["Logging", "w-[51px]"],
  ["Tools", "w-[41px]"],
  ["Wizards", "w-[51px]"],
  ["Live Tracing", "w-[69px]"],
  ["Help", "w-8"],
];

export default function App() {
  return (
    <div className="min-h-screen bg-white">
      <main className="relative w-[70.2%] min-w-[1240px]">
        <header className="flex h-[21px] items-center bg-white text-black">
          <PlugIcon className="ml-[2px] h-[14px] w-[14px] flex-none" />
          <h1 className="ml-1 pb-px font-['Roboto',sans-serif] text-[11px] leading-4 whitespace-nowrap">
            AEMTuner v3.2 - C:\Program Files (x86)\AEM\AEMTuner\Calibrations\AEM Updates\Honda\3-1-24.02v02.cal
          </h1>
          <span className="flex-1" />
          <div className="mr-[19px] flex items-center gap-8 pb-px">
            <button aria-label="Minimize" className="flex"><svg viewBox="0 0 10 10" className="h-[10px] w-[10px]"><path d="M0 5.500 H9" stroke="#222" /></svg></button>
            <button aria-label="Restore" className="flex"><svg viewBox="0 0 10 10" className="h-[10px] w-[10px]"><path d="M.5 2.500 H7.500 V9.500 H.5 Z M2.500 2.500 V.5 H9.500 V7.500 H7.500" fill="none" stroke="#222" /></svg></button>
            <button aria-label="Close" className="flex"><svg viewBox="0 0 10 10" className="h-[10px] w-[10px]"><path d="M.5 .5 L9.500 9.500 M9.500 .5 L.5 9.500" stroke="#222" /></svg></button>
          </div>
        </header>

        <nav className={`flex h-[22px] items-center bg-[#bedbff] pl-[7px] text-[10px] text-[#1c2430] ${UI}`}>
          {MENUS.map(([m, w]) => (
            <button key={m} className={`flex-none text-left whitespace-nowrap ${w}`}>{m}</button>
          ))}
        </nav>

        <div className={UI}>
          <TabStrip />
        </div>

        <div className="flex border-t border-[#8a8a8a] bg-[#f0f0f0]">
          <div className="flex flex-1 items-start border-t border-r border-l border-[#8a8a8a] pb-[22px]">
            <Panel title="Channels - Coils/Inj" className="h-[642px] w-[278px] flex-none border-r border-b border-[#8a8a8a]">
              <ChannelsTable />
              <ScrollBar thumb="h-[66px]" down />
            </Panel>
            <div className="flex h-[642px] w-[746px] flex-none flex-col">
              <Panel title="Injectors" className="h-[255px] flex-none border-r border-b border-[#8a8a8a]">
                <InjectorsTable />
                <ScrollBar thumb="h-[50px]" />
              </Panel>
              <Panel title="Coils" className="flex-1 border-r border-b border-[#8a8a8a]">
                <CoilsTable />
              </Panel>
            </div>
          </div>
          <div className="flex w-2 flex-none flex-col items-center bg-linear-to-r from-[#dce9fc] to-[#b4d4ff] pt-[293px] text-[#223]">
            <svg viewBox="0 0 4 60" className="h-[60px] w-1" aria-hidden="true">
              <path d="M4 0 V7 L0 3.500 Z M4 53 V60 L0 56.500 Z" fill="currentColor" />
              <path d="M2 13 V45" stroke="currentColor" strokeWidth="2" strokeDasharray="2 2" />
            </svg>
          </div>
        </div>

        <StatusBar />
        <Taskbar />
        <DwellWindow />
      </main>
    </div>
  );
}
